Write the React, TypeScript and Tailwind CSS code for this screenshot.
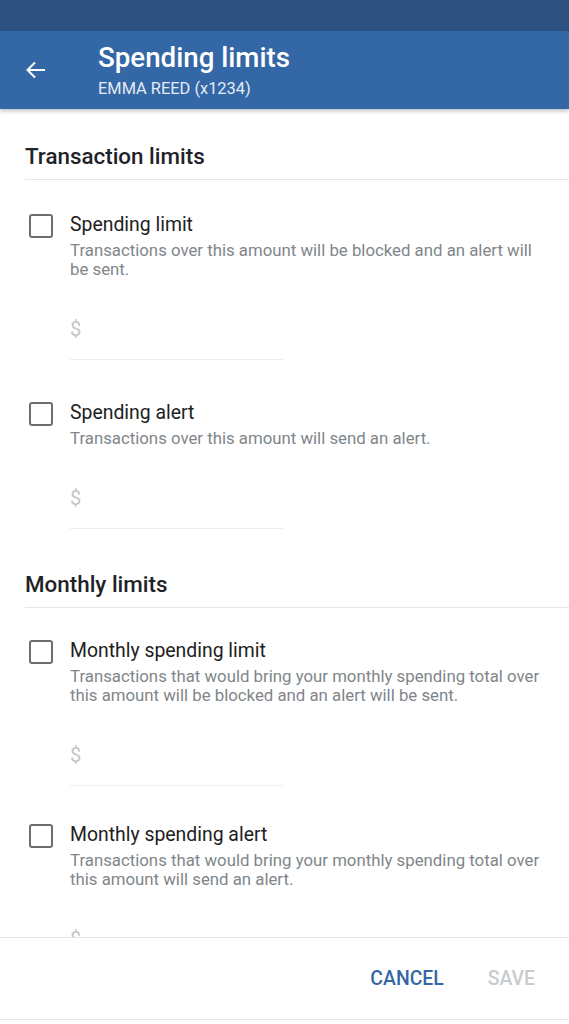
import React, { useState } from "react";

type Limit = {
  id: string;
  title: string;
  desc: string;
  top: string;
};

const sections: { title: string; top: string; items: Limit[] }[] = [
  {
    title: "Transaction limits",
    top: "pt-[33px]",
    items: [
      {
        id: "spendLimit",
        title: "Spending limit",
        desc: "Transactions over this amount will be blocked and an alert will be sent.",
        top: "pt-[33px]",
      },
      {
        id: "spendAlert",
        title: "Spending alert",
        desc: "Transactions over this amount will send an alert.",
        top: "pt-[41px]",
      },
    ],
  },
  {
    title: "Monthly limits",
    top: "pt-[41px]",
    items: [
      {
        id: "monthLimit",
        title: "Monthly spending limit",
        desc: "Transactions that would bring your monthly spending total over this amount will be blocked and an alert will be sent.",
        top: "pt-[31px]",
      },
      {
        id: "monthAlert",
        title: "Monthly spending alert",
        desc: "Transactions that would bring your monthly spending total over this amount will send an alert.",
        top: "pt-[37px]",
      },
    ],
  },
];

const LimitRow: React.FC<{ item: Limit; checked: boolean; onToggle: () => void }> = ({
  item,
  checked,
  onToggle,
}) => {
  const [value, setValue] = useState("");
  return (
    <div className={`flex ${item.top} pr-[24px]`}>
      <button
        onClick={onToggle}
        className={`mt-[1px] ml-[4px] w-[24px] h-[24px] shrink-0 rounded-[3px] border-2 ${
          checked ? "bg-[#3467a5] border-[#3467a5]" : "border-[#6b6f73]"
        }`}
      />
      <div className="ml-[17px] flex-1 min-w-0">
        <p className="text-[19.4px] leading-[24px] text-[#212121]">{item.title}</p>
        <p className="mt-[4px] text-[16.8px] leading-[19px] text-[#80868b]">{item.desc}</p>
        <div className="mt-[36px] w-[213px] border-b border-[#eeeeee] pb-[16px] flex items-center">
          <span className="text-[20px] leading-[28px] text-[#c4c7ca]">$</span>
          <input
            value={value}
            onChange={(e) => setValue(e.target.value)}
            className="ml-1 flex-1 min-w-0 outline-none text-[17px] bg-transparent"
          />
        </div>
      </div>
    </div>
  );
};

export default function App() {
  const [checked, setChecked] = useState<Record<string, boolean>>({});

  return (
    <div
      className="h-[1024px] w-full flex flex-col bg-white overflow-hidden"
      style={{ fontFamily: "Roboto, 'Liberation Sans', sans-serif" }}
    >
      {/* status bar */}
      <div className="h-[31px] shrink-0 bg-[#2c5080]" />

      {/* app bar */}
      <div className="h-[78px] shrink-0 bg-[#3467a5] flex items-center shadow-[0_2px_4px_rgba(0,0,0,0.25)] relative z-10">
        <button className="ml-[24px] w-[24px] h-[24px] flex items-center justify-center text-white">
          <svg width="24" height="24" viewBox="0 0 24 24" fill="none" stroke="currentColor" strokeWidth="2">
            <path d="M21 12H3.5M11 4.5L3.5 12l7.5 7.5" />
          </svg>
        </button>
        <div className="ml-[50px] text-white">
          <h1 className="text-[27.7px] leading-[32px] font-medium">Spending limits</h1>
          <p className="mt-[5px] text-[16.4px] leading-[20px] text-[#e3ebf5]">EMMA REED (x1234)</p>
        </div>
      </div>

      {/* content */}
      <div className="flex-1 min-h-0 overflow-hidden pl-[25px]">
        {sections.map((sec) => (
          <div key={sec.title} className={sec.top}>
            <h2 className="text-[22.4px] leading-[29px] font-medium text-[#1f2328] pb-[8px] border-b border-[#e6e6e6]">
              {sec.title}
            </h2>
            {sec.items.map((item) => (
              <LimitRow
                key={item.id}
                item={item}
                checked={!!checked[item.id]}
                onToggle={() => setChecked((p) => ({ ...p, [item.id]: !p[item.id] }))}
              />
            ))}
          </div>
        ))}
      </div>

      {/* footer */}
      <div className="h-[83px] shrink-0 border-t border-b border-[#e6e6e6] flex items-center justify-end pr-[34px] gap-[44px] mb-[4px]">
        <button className="text-[19.4px] font-medium text-[#3467a5]">CANCEL</button>
        <button className="text-[19.4px] font-medium text-[#c8ccd0]">SAVE</button>
      </div>
    </div>
  );
}
